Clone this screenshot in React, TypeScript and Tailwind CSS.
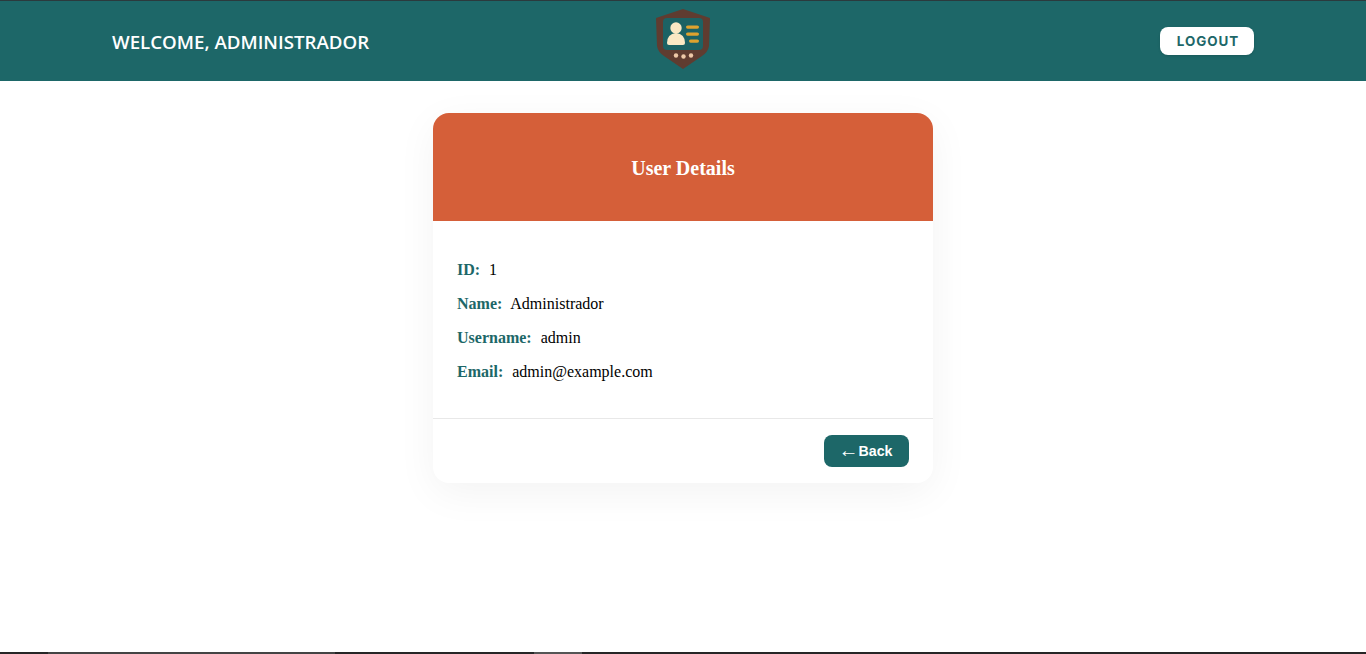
export default function App() {
  return (
    <div className="flex h-[654px] flex-col overflow-hidden bg-white font-['Liberation_Serif',serif]">
      <div className="h-px shrink-0 bg-[#2b3a3d]" />
      <header className="flex h-[80px] shrink-0 items-center justify-between bg-[#1d6768] pl-[112px] pr-[112px]">
        <div className="w-[300px] pt-[2px] font-['Open_Sans',sans-serif] text-[18.700px] font-semibold text-white">WELCOME, ADMINISTRADOR</div>
        <svg width="56" height="62" viewBox="0 0 56 62" className="mt-[-4px]">
          <path d="M28 1 L55 10 L54 38 Q53 44 47 48 L28 61 L9 48 Q3 44 2 38 L1 10 Z" fill="#5f3c30" />
          <rect x="8" y="10" width="40" height="32" rx="4" fill="#1c6264" />
          <circle cx="21" cy="20" r="5.700" fill="#fbe8c4" />
          <path d="M12 35 Q12 26 21 25 Q30 26 30 35 Q30 37 28 37 H14 Q12 37 12 35Z" fill="#fbe8c4" />
          <rect x="31" y="17.500" width="13" height="3.200" rx="1.600" fill="#dfa22e" />
          <rect x="31" y="24.500" width="13" height="3.200" rx="1.600" fill="#dfa22e" />
          <rect x="34" y="31.500" width="10" height="3.200" rx="1.600" fill="#dfa22e" />
          <circle cx="21" cy="47.500" r="2.200" fill="#eec9a8" />
          <circle cx="28.500" cy="48.500" r="2.200" fill="#eec9a8" />
          <circle cx="36" cy="47.500" r="2.200" fill="#eec9a8" />
        </svg>
        <div className="flex w-[300px] justify-end">
          <button className="flex h-[28px] w-[94px] items-center justify-center rounded-lg bg-white pl-[2px] pt-px font-['Inter',sans-serif] text-[13.400px] font-bold tracking-[1px] text-[#1d6768] shadow-sm">LOGOUT</button>
        </div>
      </header>
      <main className="flex flex-1 justify-center pt-8">
        <div className="h-[370px] w-[500px] rounded-2xl bg-white shadow-[0_10px_40px_rgba(0,0,0,0.05)]">
          <div className="flex h-[108px] items-center justify-center rounded-t-2xl bg-[#d55f39] pt-px text-[20px] font-bold text-white">User Details</div>
          <div className="flex h-[198px] flex-col gap-[16px] border-b border-[#e8e8e8] px-6 pt-10 text-[16px] leading-[18px] text-black">
            <div><b className="mr-[9px] text-[#1d6768]">ID:</b>1</div>
            <div><b className="mr-[8px] text-[#1d6768]">Name:</b>Administrador</div>
            <div><b className="mr-[9px] text-[#1d6768]">Username:</b>admin</div>
            <div><b className="mr-[9px] text-[#1d6768]">Email:</b>admin@example.com</div>
          </div>
          <div className="flex justify-end px-6 pt-4">
            <button className="flex h-[32px] w-[85px] items-center justify-center gap-0 rounded-lg bg-[#1d6768] pr-[2px] font-['Liberation_Sans',sans-serif] text-[14.200px] font-bold text-white">
              <span className="-mt-[2px] font-['Liberation_Sans',sans-serif] text-[20px] font-normal leading-none">←</span>
              <span className="pt-px">Back</span>
            </button>
          </div>
        </div>
      </main>
      <div className="flex h-[2px] shrink-0 bg-[#262626]">
        <div className="ml-[48px] h-[2px] w-[287px] bg-[#444]" />
        <div className="ml-[199px] h-[2px] w-[48px] bg-[#555]" />
      </div>
    </div>
  );
}
